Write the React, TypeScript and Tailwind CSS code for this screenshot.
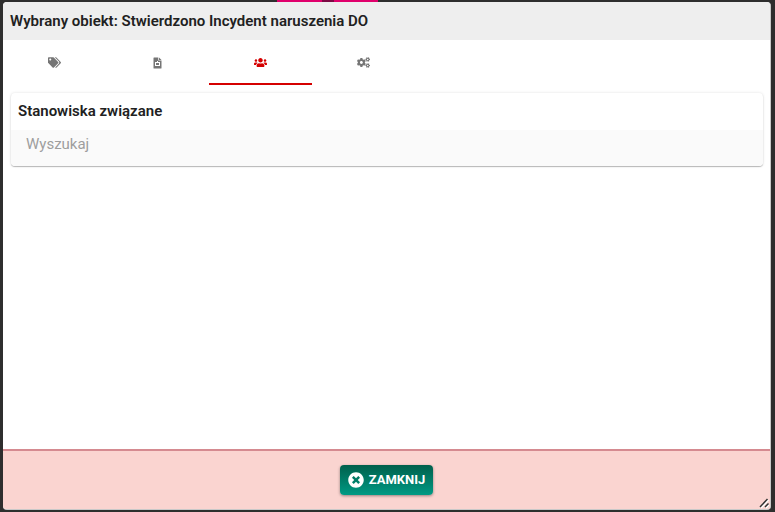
import { useState } from 'react';
import { FaTags, FaUsers, FaCogs, FaTimesCircle } from 'react-icons/fa';

function FileIcon() {
    return (
        <svg width="9" height="12" viewBox="0 0 9 12" fill="currentColor">
            <path
                fillRule="evenodd"
                d="M1 .5H5.300V3.600H8.500V11a.5.500 0 0 1-.5.5H1a.5.500 0 0 1-.5-.5V1a.5.500 0 0 1 .5-.5ZM2 5V9H7V5H5V4H4V5ZM3 6H6V8H3Z"
            />
            <path d="M6 .5L8.500 3H6Z" />
        </svg>
    );
}

const tabs = [
    { id: 'tags', label: 'Etykiety', icon: <FaTags size={13} /> },
    { id: 'files', label: 'Dokumenty', icon: <FileIcon /> },
    { id: 'positions', label: 'Stanowiska', icon: <FaUsers size={13} /> },
    { id: 'settings', label: 'Ustawienia', icon: <FaCogs size={13} /> },
];

export default function App() {
    const [active, setActive] = useState('positions');

    return (
        <div className="relative flex h-screen flex-col bg-[#2e2e2e] pt-0.5 pr-1 pb-0.5 pl-[3px] font-['Roboto',sans-serif] text-[#212121]">
            <div className="absolute top-0 left-[277px] flex h-0.5 w-[101px] justify-center bg-[#e0006c]">
                <span className="h-0.5 w-3 bg-[#7d0a45]" />
            </div>

            <section className="relative flex flex-1 flex-col overflow-hidden rounded-[4px] border-r border-b border-[#c8c8c8] bg-white">
                <header className="flex h-[38px] items-center bg-[#eeeeee] px-[7px]">
                    <h1 className="text-[15px] font-semibold">Wybrany obiekt: Stwierdzono Incydent naruszenia DO</h1>
                </header>

                <nav className="flex h-[45px]">
                    {tabs.map((tab) => (
                        <button
                            key={tab.id}
                            type="button"
                            aria-label={tab.label}
                            onClick={() => setActive(tab.id)}
                            className={
                                tab.id === active
                                    ? 'flex w-[103px] items-center justify-center border-b-2 border-[#d50000] pt-0.5 text-[#d50000]'
                                    : 'flex w-[103px] items-center justify-center border-b-2 border-transparent pt-0.5 text-[#757575]'
                            }
                        >
                            {tab.icon}
                        </button>
                    ))}
                </nav>

                <main className="flex-1 py-2 pr-[7px] pl-2">
                    <div className="overflow-hidden rounded-[4px] shadow-[0_1px_1px_rgba(0,0,0,0.25),0_0_3px_rgba(0,0,0,0.12)]">
                        <h2 className="flex h-[37px] items-center px-[7px] text-[15px] font-semibold">Stanowiska związane</h2>
                        <input
                            type="text"
                            aria-label="Wyszukaj"
                            placeholder="Wyszukaj"
                            className="block h-9 w-full bg-[#fafafa] px-[15px] pb-2 text-[15px] outline-none placeholder:text-[#9e9e9e]"
                        />
                    </div>
                </main>

                <footer className="flex h-[60px] items-center justify-center border-t-2 border-[#d58a90] bg-[#fad4d0]">
                    <button
                        type="button"
                        className="flex h-[30px] items-center gap-[5px] rounded-[4px] bg-linear-to-b from-[#00604c] to-[#009a84] px-2 text-[13px] font-bold text-white shadow-[0_1px_3px_rgba(0,0,0,0.4)]"
                    >
                        <FaTimesCircle size={16} />
                        ZAMKNIJ
                    </button>
                </footer>

                <svg className="absolute right-0 bottom-0 h-3 w-3" viewBox="0 0 12 12" fill="none" strokeWidth="1.5">
                    <path d="M3 11L10.500 3M8 11L11 7.500" stroke="#fff" />
                    <path d="M2 10L9.500 2M7 10L10.500 6.500" stroke="#333" />
                </svg>
            </section>
        </div>
    );
}
